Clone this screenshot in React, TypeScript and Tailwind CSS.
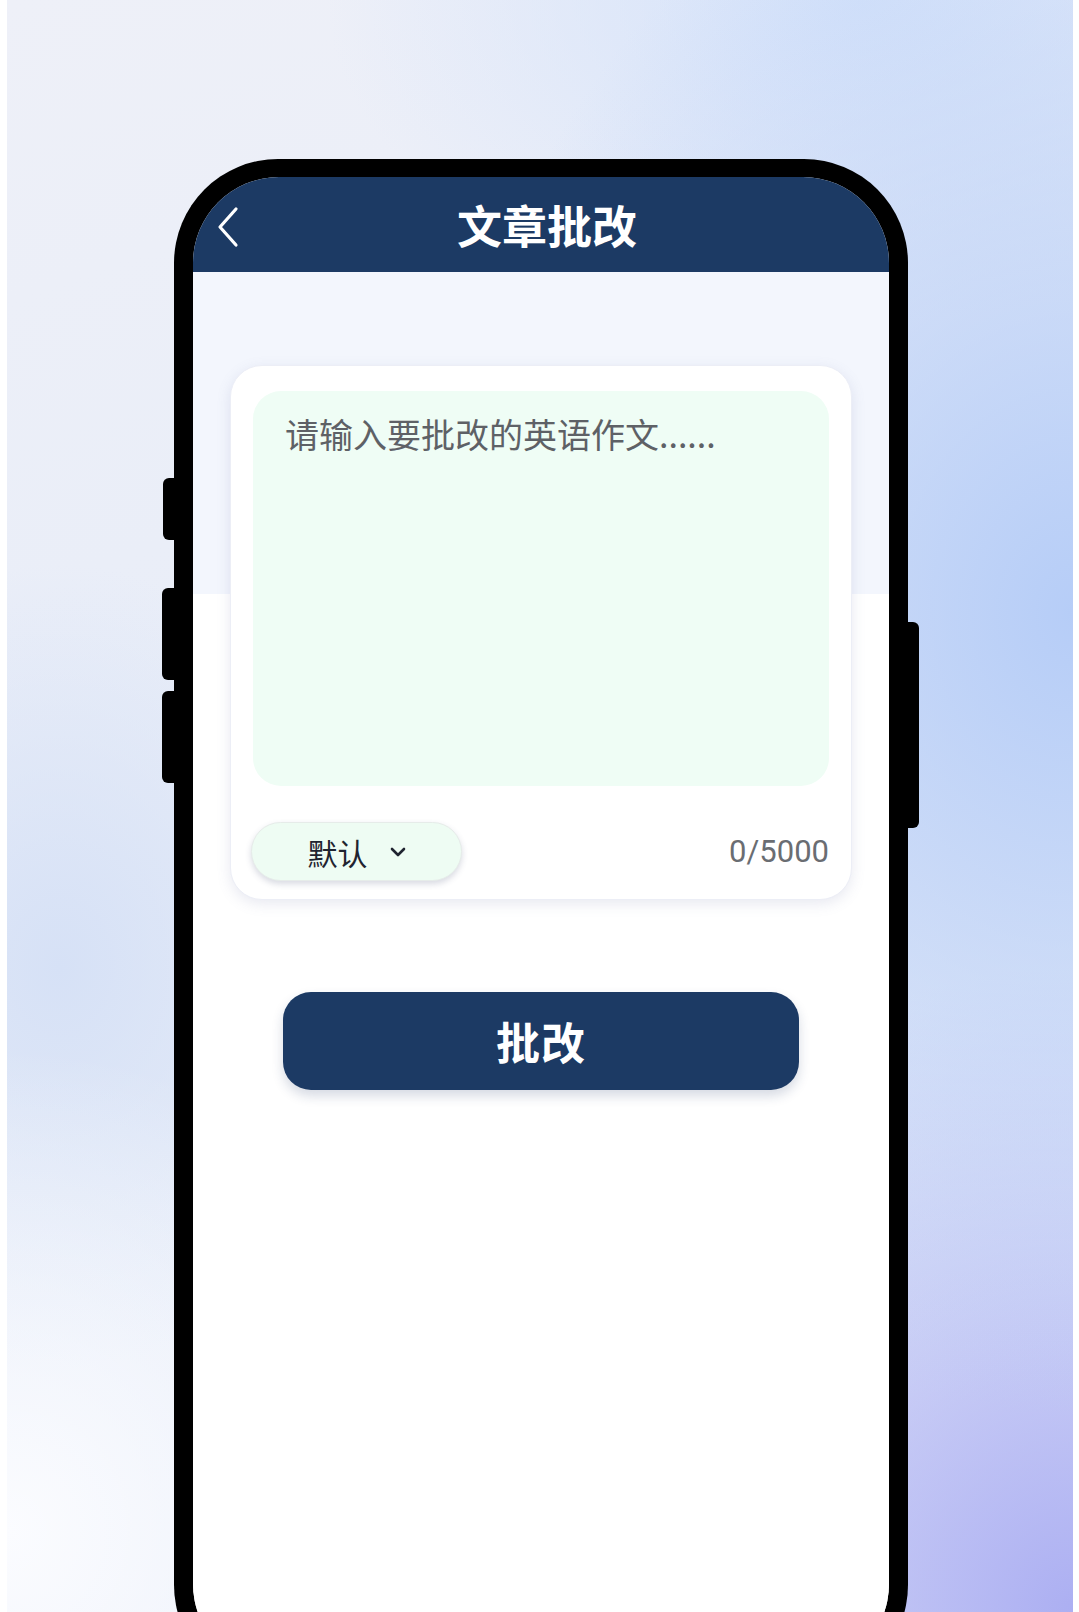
import { useState } from "react";

function BackIcon() {
  return (
    <svg width="22" height="42" viewBox="0 0 22 42" fill="none">
      <polyline points="19,3 3,21 19,39" stroke="white" strokeWidth="3.2" strokeLinecap="round" strokeLinejoin="round" />
    </svg>
  );
}

function ChevronDown() {
  return (
    <svg width="16" height="10" viewBox="0 0 16 10" fill="none">
      <polyline points="2,2 8,8 14,2" stroke="#1f2430" strokeWidth="2.6" strokeLinecap="round" strokeLinejoin="round" />
    </svg>
  );
}

export default function App() {
  const [text, setText] = useState("");

  return (
    <div className="h-[1612px] w-full overflow-hidden bg-white font-['Noto_Sans_CJK_SC','Noto_Sans',sans-serif]">
      {/* backdrop */}
      <div className="h-full ml-[7px] mr-[6px] pt-[159px] pl-[167px] bg-[radial-gradient(ellipse_60%_50%_at_100%_38%,#b6cdf7_0%,transparent_100%),radial-gradient(ellipse_55%_40%_at_100%_100%,#acaff2_0%,transparent_100%),radial-gradient(ellipse_45%_30%_at_0%_95%,#fbfcff_0%,transparent_100%),radial-gradient(ellipse_30%_25%_at_5%_60%,#d6e1f6_0%,transparent_100%),radial-gradient(ellipse_50%_20%_at_80%_0%,#d4e2fa_0%,transparent_100%),linear-gradient(160deg,#eef0f8_0%,#e6ecf8_60%,#e9eefa_100%)]">
        {/* phone */}
        <div className="relative w-[734px] h-[1530px] rounded-[104px] bg-black p-[19px] pt-[18px]">
          <div className="absolute left-[-11px] top-[319px] w-[20px] h-[62px] rounded-[6px] bg-black" />
          <div className="absolute left-[-12px] top-[429px] w-[20px] h-[92px] rounded-[6px] bg-black" />
          <div className="absolute left-[-12px] top-[532px] w-[20px] h-[92px] rounded-[6px] bg-black" />
          <div className="absolute right-[-11px] top-[463px] w-[20px] h-[206px] rounded-[6px] bg-black" />

          {/* screen */}
          <div className="flex h-full flex-col overflow-hidden rounded-[86px] bg-white">
            <header className="relative flex h-[95px] shrink-0 items-center justify-center bg-[#1c3a64]">
              <button className="absolute left-[24px] top-[29px]">
                <BackIcon />
              </button>
              <h1 className="ml-[12px] text-[45px] font-bold leading-none text-white">文章批改</h1>
            </header>

            <main className="flex-1 bg-[linear-gradient(to_bottom,#f3f6fd_322px,#ffffff_322px)] px-[37px] pt-[93px]">
              <section className="rounded-[32px] border border-[#eceef6] bg-white px-[22px] pb-[18px] pt-[25px] shadow-[0_4px_14px_rgba(110,120,170,0.16)]">
                <textarea
                  value={text}
                  onChange={(e) => setText(e.target.value)}
                  placeholder="请输入要批改的英语作文......"
                  className="block h-[395px] w-full resize-none rounded-[28px] bg-[#effdf5] px-[32px] pt-[19px] text-[34px] leading-[1.4] text-[#333] outline-none placeholder:text-[#5e6166]"
                />
                <div className="mt-[36px] flex items-center justify-between">
                  <button className="ml-[-2px] flex h-[59px] w-[211px] items-center justify-center gap-[22px] rounded-full border border-[#e6ece9] bg-[#eefcf3] shadow-[0_3px_6px_rgba(60,70,110,0.2)]">
                    <span className="text-[30px] leading-none text-[#1f2430]">默认</span>
                    <ChevronDown />
                  </button>
                  <span className="font-['Roboto',sans-serif] text-[31px] leading-none text-[#6a6d72]">{text.length}/5000</span>
                </div>
              </section>

              <button className="mx-auto mt-[92px] flex h-[98px] w-[516px] items-center justify-center rounded-[28px] bg-[#1c3a64] shadow-[0_6px_12px_rgba(30,50,100,0.18)]">
                <span className="text-[44px] font-bold leading-none tracking-[1px] text-white">批改</span>
              </button>
            </main>
          </div>
        </div>
      </div>
    </div>
  );
}
